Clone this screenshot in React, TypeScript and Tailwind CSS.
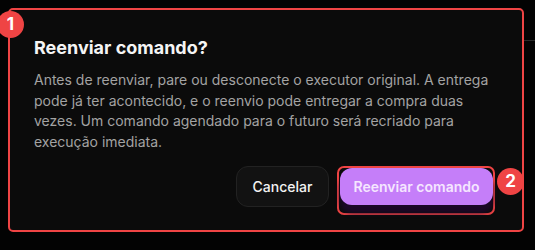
import React from 'react';

const Badge: React.FC<{ n: number; className: string }> = ({ n, className }) => (
  <div
    className={`absolute w-[27px] h-[27px] rounded-full bg-[#ef4444] text-white text-[17px] font-bold flex items-center justify-center leading-none ${className}`}
  >
    {n}
  </div>
);

const App: React.FC = () => {
  return (
    <div
      className="relative w-[535px] h-[250px] bg-[#030303] p-[8px] pr-[11px] overflow-hidden"
      style={{ fontFamily: 'Inter, "Noto Sans", sans-serif' }}
    >
      {/* page header line behind the overlay */}
      <div className="absolute left-[524px] top-[40px] w-[11px] h-px bg-[#2a2a2a]" />

      <div className="flex flex-col h-[224px] rounded-[5px] border-2 border-[#ef4444] bg-[#0b0b0b] px-[24px] pt-[24px]">
        <h2 className="text-[18px] leading-7 font-bold text-[#f5f5f5]">Reenviar comando?</h2>
        <p className="mt-2 text-[14px] leading-[20.5px] text-[#a3a3a3] pr-[2px]">
          Antes de reenviar, pare ou desconecte o executor original. A entrega pode já ter acontecido, e o reenvio pode
          entregar a compra duas vezes. Um comando agendado para o futuro será recriado para execução imediata.
        </p>

        <div className="mt-[14px] flex items-start justify-end gap-2 pr-[3px]">
          <button className="h-[41px] w-[93px] rounded-xl border border-[#222] bg-[#121212] text-[14px] font-medium text-[#f2f2f2]">
            Cancelar
          </button>
          <div className="w-[158px] h-[49px] rounded-[7px] border-2 border-[#ef4444] pl-px">
            <button className="w-[153px] h-[37px] rounded-xl bg-[#c57ef9] text-[14px] font-semibold text-[#f5e6ff] shadow-[0_8px_5px_rgba(30,8,42,0.95)]">
              Reenviar comando
            </button>
          </div>
        </div>
      </div>

      <Badge n={1} className="left-[-3px] top-[11px]" />
      <Badge n={2} className="left-[497px] top-[168px]" />
    </div>
  );
};

export default App;
